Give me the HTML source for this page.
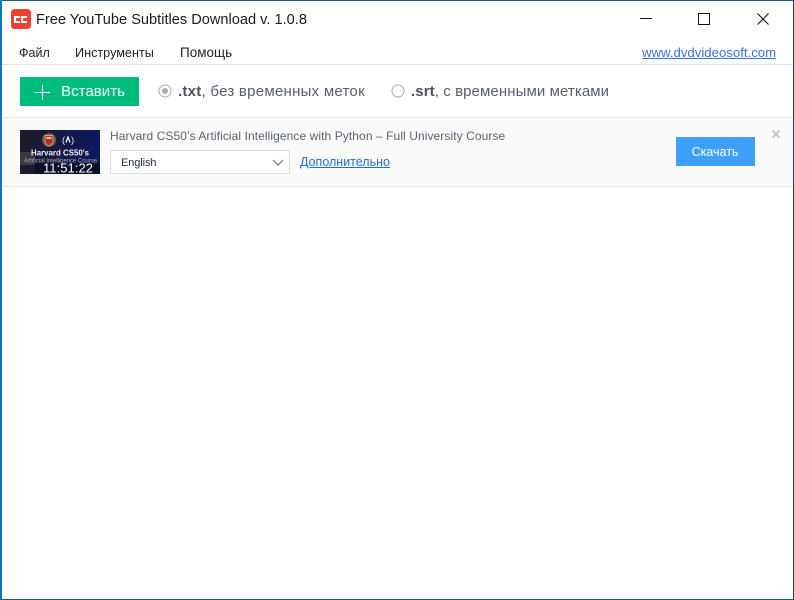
<!DOCTYPE html>
<html lang="ru">
<head>
<meta charset="utf-8">
<title>Free YouTube Subtitles Download</title>
<style>
html,body{margin:0;padding:0;background:#fff}
body{width:794px;height:600px;position:relative;overflow:hidden;font-family:"Liberation Sans","DejaVu Sans",sans-serif}
.a{position:absolute;white-space:nowrap}
</style>
</head>
<body>
<div class="a" style="left:0;top:0;width:794px;height:1px;background:#1c5a7c"></div>
<div class="a" style="left:0;top:0;width:2px;height:600px;background:#0a78b8"></div>
<div class="a" style="right:0;top:0;width:1px;height:600px;background:#1c4a68"></div>
<div class="a" style="left:0;bottom:0;width:794px;height:1px;background:#1c5a70"></div>

<svg class="a" style="left:11px;top:9px" width="20" height="20" viewBox="0 0 20 20">
<rect width="20" height="20" rx="3.500" fill="#ef4136"/>
<path d="M9 8H4V13H9M16 8H11V13H16" fill="none" stroke="#fff" stroke-width="2"/>
</svg>
<div class="a" style="left:36px;top:11px;font-size:14.600px;line-height:18px;color:#1a1a1a">Free YouTube Subtitles Download v. 1.0.8</div>

<svg class="a" style="left:640px;top:13px" width="135" height="12" viewBox="0 0 135 12" fill="none" stroke="#111" stroke-width="1">
<path d="M0 5.500H12"/>
<rect x="58.500" y=".5" width="11" height="11"/>
<path d="M117.500 .5L128.500 11.500M128.500 .5L117.500 11.500"/>
</svg>

<div class="a" style="left:19px;top:45px;font-size:12.500px;line-height:16px;color:#222">Файл</div>
<div class="a" style="left:75px;top:45px;font-size:12.650px;line-height:16px;color:#222">Инструменты</div>
<div class="a" style="left:180px;top:45px;font-size:13.500px;line-height:16px;color:#222">Помощь</div>
<div class="a" style="left:642px;top:45px;font-size:13.200px;line-height:16px;color:#3a6fe0;text-decoration:underline">www.dvdvideosoft.com</div>

<div class="a" style="left:2px;top:64px;width:791px;height:1px;background:#e2e2e2"></div>

<div class="a" style="left:20px;top:77px;width:119px;height:29px;background:#00bb7e"></div>
<svg class="a" style="left:35px;top:85px" width="15" height="15" viewBox="0 0 15 15"><path d="M7.500 0V15M0 7.500H15" stroke="#e8fff6" stroke-width="1"/></svg>
<div class="a" style="left:61px;top:83px;font-size:15.100px;line-height:18px;color:#f2fffa">Вставить</div>

<svg class="a" style="left:158px;top:84px" width="14" height="14" viewBox="0 0 14 14">
<circle cx="7" cy="7" r="6" fill="#fff" stroke="#b5b5b5" stroke-width="1.200"/>
<circle cx="7" cy="7" r="3" fill="#a8a8a8"/>
</svg>
<div class="a" style="left:178px;top:83px;font-size:15px;letter-spacing:.26px;line-height:18px;color:#555e6e"><b style="color:#4a5060">.txt</b>, без временных меток</div>

<svg class="a" style="left:391px;top:84px" width="14" height="14" viewBox="0 0 14 14">
<circle cx="7" cy="7" r="6" fill="#fff" stroke="#b5b5b5" stroke-width="1.200"/>
</svg>
<div class="a" style="left:411px;top:83px;font-size:15px;letter-spacing:.09px;line-height:18px;color:#555e6e"><b style="color:#4a5060">.srt</b>, с временными метками</div>

<div class="a" style="left:2px;top:117px;width:791px;height:70px;background:#fafafa;border-top:1px solid #e6e6e6;border-bottom:1px solid #e6e6e6;box-sizing:border-box"></div>

<svg class="a" style="left:20px;top:130px" width="80" height="44" viewBox="0 0 80 44">
<defs><linearGradient id="g" x1="0" x2="1" y1="0" y2="0"><stop offset="0" stop-color="#1e1a2a"/><stop offset="1" stop-color="#0c1860"/></linearGradient></defs>
<rect width="80" height="44" fill="url(#g)"/>
<rect x="0" y="22" width="15" height="13" fill="#3a3840"/>
<rect x="15" y="33" width="65" height="11" fill="#0c1028"/>
<circle cx="29" cy="10" r="7" fill="#6a5a3a"/>
<path d="M25 5.500H33V11Q33 14.500 29 16Q25 14.500 25 11Z" fill="#b52a2a" stroke="#d8c8a8" stroke-width=".7"/>
<path d="M26.500 8H31.500" stroke="#f0e8d8" stroke-width="1.500"/>
<text x="42" y="13" font-size="9.500" fill="#dfe3ee" font-family="Liberation Sans">(</text>
<path d="M46 12.500L48 7L50 12.500" fill="none" stroke="#fff" stroke-width="1.200"/>
<text x="51" y="13" font-size="9.500" fill="#dfe3ee" font-family="Liberation Sans">)</text>
<text x="11" y="25.500" font-size="8.500" font-weight="bold" fill="#f2f2f2" font-family="Liberation Sans" textLength="58" lengthAdjust="spacingAndGlyphs">Harvard CS50's</text>
<text x="4" y="32.500" font-size="6.500" fill="#a8a8b0" font-family="Liberation Sans" textLength="73" lengthAdjust="spacingAndGlyphs">Artificial Intelligence Course</text>
<text x="23" y="42.500" font-size="13" fill="#fff" font-family="Liberation Sans" textLength="50" lengthAdjust="spacing">11:51:22</text>
</svg>

<div class="a" style="left:110px;top:129px;font-size:12px;line-height:15px;color:#5a6472;letter-spacing:.08px">Harvard CS50’s Artificial Intelligence with Python – Full University Course</div>

<div class="a" style="left:110px;top:150px;width:180px;height:24px;background:#fff;border:1px solid #dcdcdc;box-sizing:border-box"></div>
<div class="a" style="left:121px;top:156px;font-size:11px;letter-spacing:-.1px;line-height:14px;color:#26304a">English</div>
<svg class="a" style="left:272px;top:159px" width="12" height="8" viewBox="0 0 12 8"><path d="M1 1L6 6L11 1" fill="none" stroke="#8c8c8c" stroke-width="1.500"/></svg>
<div class="a" style="left:300px;top:155px;font-size:12.500px;line-height:15px;color:#1f6fd0;text-decoration:underline">Дополнительно</div>

<div class="a" style="left:676px;top:137px;width:78px;height:29px;background:#3fa0fc;color:#fff;font-size:12.500px;line-height:30px;text-align:center;padding-right:1px">Скачать</div>
<svg class="a" style="left:771px;top:129px" width="10" height="10" viewBox="0 0 10 10"><path d="M1.500 1.500L8.500 8.500M8.500 1.500L1.500 8.500" stroke="#c8c8c8" stroke-width="2"/></svg>
</body>
</html>
